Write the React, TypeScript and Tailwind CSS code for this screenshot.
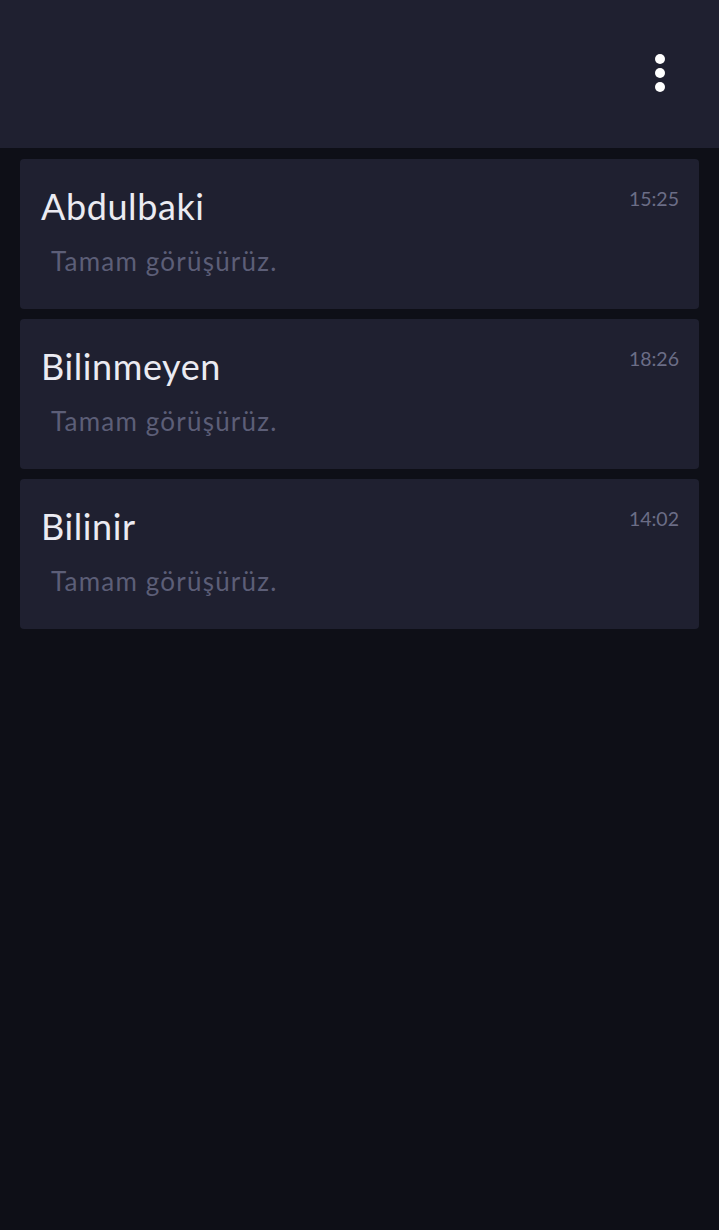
const chats = [
  { name: 'Abdulbaki', time: '15:25', msg: 'Tamam görüşürüz.' },
  { name: 'Bilinmeyen', time: '18:26', msg: 'Tamam görüşürüz.' },
  { name: 'Bilinir', time: '14:02', msg: 'Tamam görüşürüz.' },
]

export default function App() {
  return (
    <div className="min-h-[1230px] bg-[#0e0f17] font-['Lato',sans-serif]">
      <header className="h-[148px] bg-[#1f2030] flex justify-end items-start pt-[54px] pr-[54px]">
        <button className="flex flex-col gap-[4px]">
          <span className="w-[10px] h-[10px] rounded-full bg-white" />
          <span className="w-[10px] h-[10px] rounded-full bg-white" />
          <span className="w-[10px] h-[10px] rounded-full bg-white" />
        </button>
      </header>
      <div className="px-[20px] pt-[11px] flex flex-col gap-[10px]">
        {chats.map((c) => (
          <div key={c.name} className="h-[150px] rounded-[4px] bg-[#1f2030] relative pl-[21px]">
            <span className="absolute right-[20px] top-[25px] text-[19.5px] text-[#6b6d86]">{c.time}</span>
            <div className="pt-[24px] text-[36px] leading-[46px] tracking-[0.6px] text-[#ebebf2]">{c.name}</div>
            <div className="pl-[10px] pt-[16px] text-[26px] leading-[33px] tracking-[1.2px] text-[#5c5e77]">{c.msg}</div>
          </div>
        ))}
      </div>
    </div>
  )
}
